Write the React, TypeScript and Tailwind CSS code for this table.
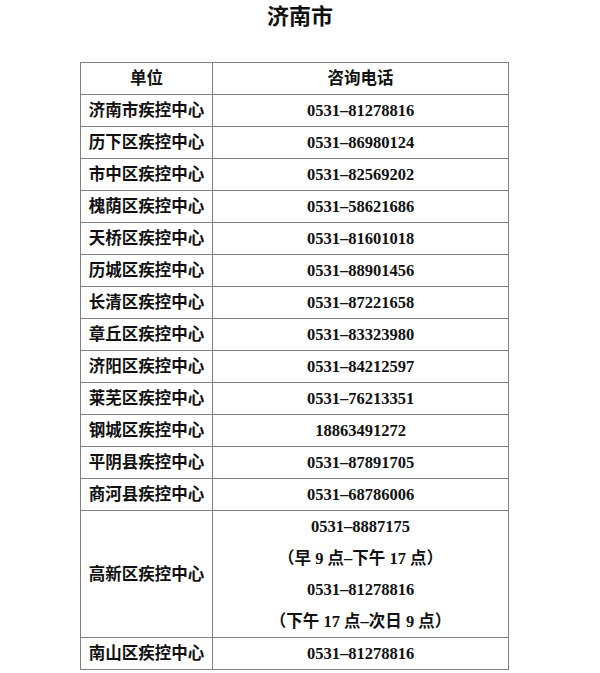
const rows: [string, string][] = [
  ['济南市疾控中心', '0531–81278816'],
  ['历下区疾控中心', '0531–86980124'],
  ['市中区疾控中心', '0531–82569202'],
  ['槐荫区疾控中心', '0531–58621686'],
  ['天桥区疾控中心', '0531–81601018'],
  ['历城区疾控中心', '0531–88901456'],
  ['长清区疾控中心', '0531–87221658'],
  ['章丘区疾控中心', '0531–83323980'],
  ['济阳区疾控中心', '0531–84212597'],
  ['莱芜区疾控中心', '0531–76213351'],
  ['钢城区疾控中心', '18863491272'],
  ['平阴县疾控中心', '0531–87891705'],
  ['商河县疾控中心', '0531–68786006'],
];

const cell = 'border border-[#808080] text-center font-bold h-[31px] p-0 leading-[31px]';

export default function App() {
  return (
    <div
      className="w-[600px] h-[673px] bg-white text-[#111] overflow-hidden"
      style={{ fontFamily: '"Liberation Serif", "Noto Sans CJK SC", serif' }}
    >
      <h1 className="text-[22px] font-bold text-center leading-[32px] pt-[1px]">济南市</h1>
      <table className="ml-[80px] mt-[29px] border-collapse w-[429px] text-[16.5px]">
        <colgroup>
          <col className="w-[132px]" />
          <col />
        </colgroup>
        <tbody>
          <tr>
            <td className={cell}>单位</td>
            <td className={cell}>咨询电话</td>
          </tr>
          {rows.map(([name, phone]) => (
            <tr key={name}>
              <td className={cell}>{name}</td>
              <td className={cell}>{phone}</td>
            </tr>
          ))}
          <tr>
            <td className={cell}>高新区疾控中心</td>
            <td className="border border-[#808080] text-center font-bold p-0 leading-[31.5px]">
              <div>0531–8887175</div>
              <div>（早 9 点–下午 17 点）</div>
              <div>0531–81278816</div>
              <div>（下午 17 点–次日 9 点）</div>
            </td>
          </tr>
          <tr>
            <td className={cell}>南山区疾控中心</td>
            <td className={cell}>0531–81278816</td>
          </tr>
        </tbody>
      </table>
    </div>
  );
}
